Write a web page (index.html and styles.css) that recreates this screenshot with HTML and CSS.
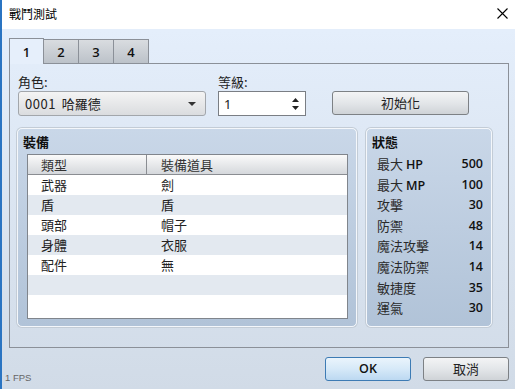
FILE: index.html
```html
<!DOCTYPE html>
<html lang="zh-Hant">
<head>
<meta charset="utf-8">
<title>戰鬥測試</title>
<link rel="stylesheet" href="styles.css">
</head>
<body>
<div class="window">
  <div class="titlebar">
    <span class="title">戰鬥測試</span>
    <svg class="close" width="11" height="11" viewBox="0 0 11 11"><path d="M0.5 0.5 L10.5 10.5 M10.5 0.5 L0.5 10.5" stroke="#000" stroke-width="1.1" fill="none"/></svg>
  </div>
  <div class="client">
    <div class="tabs">
      <div class="tab active">1</div>
      <div class="tab">2</div>
      <div class="tab">3</div>
      <div class="tab">4</div>
    </div>
    <div class="tabpanel">
      <div class="toprow">
        <div class="field">
          <div class="label">角色:</div>
          <div class="combo"><span class="combo-text"><span class="num">0001</span> 哈羅德</span><span class="combo-arrow"></span></div>
        </div>
        <div class="field">
          <div class="label">等級:</div>
          <div class="spin"><span class="spin-text">1</span>
            <svg class="spin-arrows" width="7" height="14" viewBox="0 0 7 14"><path d="M3.5 1 L7 5 L0 5 Z M0 9 L7 9 L3.5 13 Z" fill="#222"/></svg>
          </div>
        </div>
        <div class="btn init">初始化</div>
      </div>
      <div class="groups">
        <div class="group equip">
          <div class="group-title">裝備</div>
          <div class="table">
            <div class="thead"><div class="c1">類型</div><div class="c2">裝備道具</div></div>
            <div class="row"><div class="c1">武器</div><div class="c2">劍</div></div>
            <div class="row alt"><div class="c1">盾</div><div class="c2">盾</div></div>
            <div class="row"><div class="c1">頭部</div><div class="c2">帽子</div></div>
            <div class="row alt"><div class="c1">身體</div><div class="c2">衣服</div></div>
            <div class="row"><div class="c1">配件</div><div class="c2">無</div></div>
            <div class="row alt"><div class="c1"></div><div class="c2"></div></div>
            <div class="row"><div class="c1"></div><div class="c2"></div></div>
          </div>
        </div>
        <div class="group status">
          <div class="group-title">狀態</div>
          <div class="stats">
            <span class="sl">最大 <b>HP</b></span><span class="sv">500</span>
            <span class="sl">最大 <b>MP</b></span><span class="sv">100</span>
            <span class="sl">攻擊</span><span class="sv">30</span>
            <span class="sl">防禦</span><span class="sv">48</span>
            <span class="sl">魔法攻擊</span><span class="sv">14</span>
            <span class="sl">魔法防禦</span><span class="sv">14</span>
            <span class="sl">敏捷度</span><span class="sv">35</span>
            <span class="sl">運氣</span><span class="sv">30</span>
          </div>
        </div>
      </div>
    </div>
    <div class="footer">
      <div class="btn ok">OK</div>
      <div class="btn cancel">取消</div>
    </div>
    <div class="fps">1 FPS</div>
  </div>
</div>
</body>
</html>
```
FILE: styles.css
```css
html, body {
  margin: 0;
  padding: 0;
}
body {
  width: 515px;
  height: 389px;
  overflow: hidden;
  font-family: "Noto Sans CJK TC", "Noto Sans", sans-serif;
  font-size: 13px;
  color: #1a1a1a;
}
.window {
  width: 515px;
  height: 389px;
  box-sizing: border-box;
  border-left: 2px solid #2a74c2;
  border-bottom: 2px solid #2a74c2;
  display: flex;
  flex-direction: column;
}
.titlebar {
  height: 29px;
  flex: none;
  background: #fff;
  display: flex;
  align-items: center;
  justify-content: space-between;
  padding: 0 7px 0 7px;
}
.title {
  font-size: 12px;
  line-height: 16px;
  color: #000;
  margin-top: -2px;
}
.close {
  margin-top: -3px;
}
.client {
  position: relative;
  flex: 1;
  display: flex;
  flex-direction: column;
  padding: 9px 6px 9px 7px;
  background: linear-gradient(#e4eefb, #d1dbe7);
}
.tabs {
  display: flex;
  height: 25px;
  align-items: flex-end;
  flex: none;
}
.tab {
  width: 35px;
  box-sizing: border-box;
  height: 24px;
  border: 1px solid #8b9098;
  border-left: none;
  border-bottom: none;
  background: linear-gradient(#d9dce0, #bcc2c9);
  font-family: "Open Sans", "Noto Sans CJK TC", sans-serif;
  font-weight: 600;
  font-size: 13px;
  text-align: center;
  line-height: 24px;
  color: #111;
}
.tab.active {
  height: 26px;
  margin-bottom: -1px;
  border-left: 1px solid #8b9098;
  background: #e6effb;
  position: relative;
  line-height: 26px;
}
.tabpanel {
  flex: 1;
  border: 1px solid #8b9098;
  display: flex;
  flex-direction: column;
  padding: 10px 15px 20px 7px;
}
.toprow {
  display: flex;
  align-items: flex-end;
  gap: 12px;
  padding-left: 1px;
}
.field {
  display: flex;
  flex-direction: column;
}
.label {
  line-height: 16px;
  height: 16px;
  margin-bottom: 1px;
  color: #222;
}
.combo {
  width: 188px;
  height: 25px;
  box-sizing: border-box;
  border: 1px solid #a2a6ab;
  border-radius: 3px;
  background: linear-gradient(#f4f4f4, #dadcdf);
  display: flex;
  align-items: center;
  justify-content: space-between;
  padding: 0 9px 0 6px;
}
.combo-text {
  line-height: 16px;
  color: #222;
  word-spacing: 3px;
}
.combo-text .num {
  letter-spacing: 0.5px;
}
.combo-arrow {
  width: 0;
  height: 0;
  border-left: 4px solid transparent;
  border-right: 4px solid transparent;
  border-top: 4px solid #333;
}
.spin {
  width: 88px;
  height: 25px;
  box-sizing: border-box;
  border: 1px solid #7a7e84;
  background: #fff;
  display: flex;
  align-items: center;
  justify-content: space-between;
  padding: 0 6px 0 5px;
}
.spin-text {
  font-family: "Noto Sans", sans-serif;
  line-height: 16px;
}
.btn {
  box-sizing: border-box;
  height: 24px;
  border: 1px solid #7d8185;
  border-radius: 3px;
  background: linear-gradient(#f3f4f5 0%, #e3e6e9 50%, #cfd3d7 100%);
  text-align: center;
  line-height: 22px;
  color: #222;
}
.init {
  width: 137px;
  margin-left: 14px;
  margin-bottom: 1px;
}
.groups {
  display: flex;
  gap: 9px;
  margin-top: 12px;
  flex: 1;
}
.group {
  box-sizing: border-box;
  border: 1px solid #f4f7fb;
  border-radius: 5px;
  background: linear-gradient(#c9d7e8, #b1c3d8);
  box-shadow: 0 0 0 1px #c3ccd6;
  display: flex;
  flex-direction: column;
}
.equip {
  width: 340px;
  padding: 5px 8px 7px 9px;
}
.status {
  width: 126px;
  padding: 5px 8px 7px 5px;
}
.group-title {
  line-height: 16px;
  font-weight: 700;
  color: #111;
  margin-left: -4px;
}
.status .group-title {
  margin-left: 0;
}
.table {
  margin-top: 4px;
  border: 1px solid #80858c;
  background: #fff;
  flex: 1;
}
.thead, .row {
  display: flex;
  height: 20px;
  line-height: 20px;
}
.thead {
  background: linear-gradient(#fafafa, #d5d8dc);
  border-bottom: 1px solid #8a8d92;
  height: 19px;
  line-height: 19px;
  color: #333;
}
.c1 {
  width: 119px;
  box-sizing: border-box;
  padding-left: 13px;
}
.thead .c1 {
  border-right: 1px solid #8a8d92;
}
.c2 {
  flex: 1;
  padding-left: 14px;
}
.row .c1, .row .c2 {
  color: #222;
}
.row.alt {
  background: #e3e9f0;
}
.stats {
  display: grid;
  grid-template-columns: 1fr auto;
  margin-top: 4px;
  padding-left: 5px;
  grid-auto-rows: 20.6px;
  line-height: 20.6px;
}
.sl {
  color: #2a2a2a;
}
.sl b {
  font-family: "Open Sans", sans-serif;
  font-weight: 600;
  font-size: 12.5px;
  color: #111;
}
.sv {
  text-align: right;
  font-family: "Open Sans", sans-serif;
  font-weight: 600;
  font-size: 12.5px;
  color: #111;
}
.footer {
  display: flex;
  justify-content: flex-end;
  gap: 12px;
  margin-top: 9px;
  flex: none;
}
.ok, .cancel {
  width: 86px;
}
.ok {
  border-color: #3d7bb4;
  background: linear-gradient(#eaf4fc 0%, #d6e9f8 50%, #bcd8f1 100%);
  font-family: "Open Sans", sans-serif;
  font-weight: 600;
  font-size: 12.5px;
  color: #111;
}
.fps {
  position: absolute;
  left: 3px;
  bottom: 7px;
  font-family: "Liberation Sans", sans-serif;
  font-size: 9.5px;
  line-height: 10px;
  color: #666;
}
```
